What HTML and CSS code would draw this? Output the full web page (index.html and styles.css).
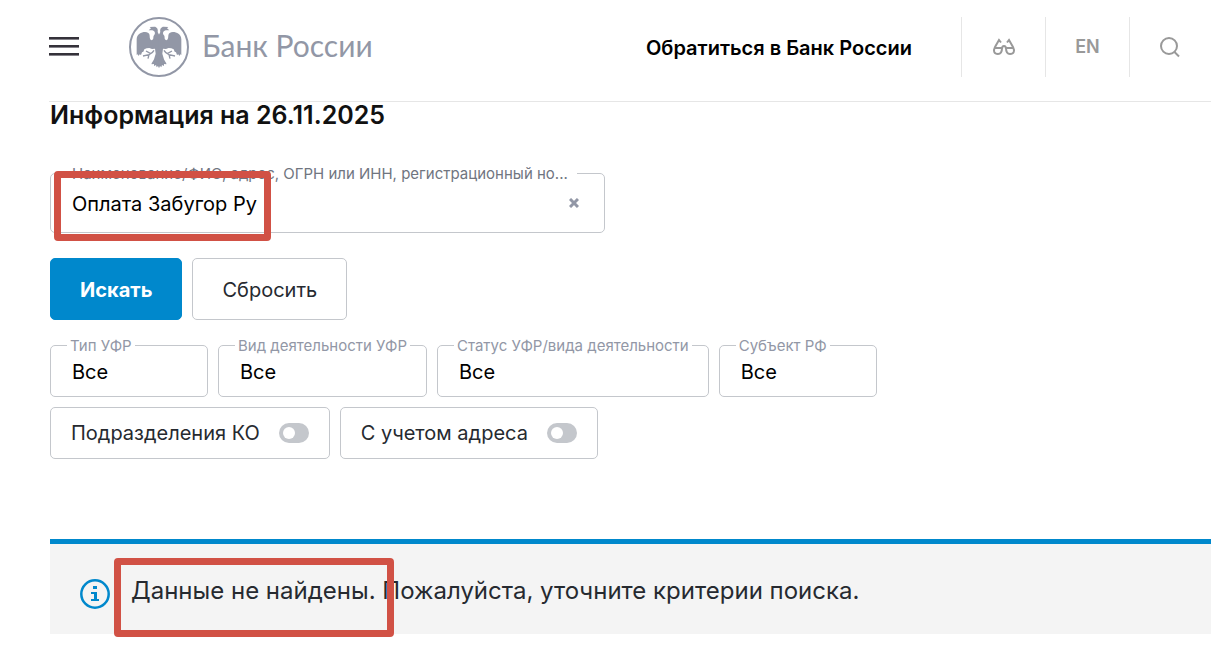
FILE: index.html
```html
<!DOCTYPE html>
<html lang="ru">
<head>
  <meta charset="UTF-8">
  <meta name="viewport" content="width=device-width, initial-scale=1">
  <title>Банк России</title>
  <link rel="stylesheet" href="styles.css">
</head>
<body>

  <header class="header">
    <button class="menu-btn" type="button" aria-label="Меню">
      <span></span>
      <span></span>
      <span></span>
    </button>

    <a class="logo" href="#">
      <svg class="logo-sign" viewBox="0 0 180 180" aria-hidden="true">
        <defs>
          <g id="half">
            <path d="M91 55 L86 45 C88 36 83 29 76 29 L62 30 L66 34 L59 40 L70 40 C80 43 79 51 75 55 C71 60 76 67 68 70 C58 66 66 53 58 48 C48 41 23 48 23 67 L23 114 L26 112 L29 117 L32 112 L36 114 L39 106 L43 104 L46 97 L53 94 L61 93 L69 96 L78 95 L80 110 L76 124 C75 131 66 138 68 142 L75 141 L75 147 L81 144 L83 151 L87 147 L91 153 Z"/>
            <path class="claw" d="M75 100 Q71 108 60 113 M65 110 L51 102 M60 113 L42 117 M60 113 L57 125"/>
          </g>
        </defs>
        <circle cx="90" cy="90" r="87"/>
        <use href="#half"/>
        <use href="#half" transform="matrix(-1 0 0 1 180 0)"/>
      </svg>
      <span class="logo-text">Банк России</span>
    </a>

    <a class="contact" href="#">Обратиться в Банк России</a>

    <nav class="tools">
      <a class="tool" href="#" aria-label="Версия для слабовидящих">
        <svg width="24" height="18" viewBox="0 0 24 18" aria-hidden="true">
          <path d="M3 9 L7 2 L9 4.500 M21 9 L17 2 L15 4.500 M2 10 H10 M14 10 H22 M10 11 Q10 8 12 8 Q14 8 14 11 M3 9 C1 13 2 16 6 16 C9 16 10 14 10 10 M14 10 C14 14 15 16 18 16 C22 16 23 13 21 9"/>
        </svg>
      </a>
      <a class="tool" href="#">EN</a>
      <button class="tool tool-search" type="button" aria-label="Поиск">
        <svg width="22" height="22" viewBox="0 0 22 22" aria-hidden="true">
          <circle cx="10" cy="10" r="8"/>
          <path d="M15.500 16 L20 20.500"/>
        </svg>
      </button>
    </nav>
  </header>

  <main>
    <h1>Информация на 26.11.2025</h1>

    <form>
      <div class="search">
        <label for="query">Наименование/ФИО, адрес, ОГРН или ИНН, регистрационный но...</label>
        <input id="query" type="text" value="Оплата Забугор Ру">
        <button class="clear" type="button" aria-label="Очистить">
          <svg width="10" height="10" viewBox="0 0 10 10" aria-hidden="true">
            <path d="M1 1 L9 9 M9 1 L1 9"/>
          </svg>
        </button>
      </div>

      <div class="row actions">
        <button class="btn btn-primary" type="submit">Искать</button>
        <button class="btn" type="reset">Сбросить</button>
      </div>

      <div class="row">
        <div class="filter">
          <label for="type">Тип УФР</label>
          <select id="type"><option>Все</option></select>
        </div>
        <div class="filter">
          <label for="activity">Вид деятельности УФР</label>
          <select id="activity"><option>Все</option></select>
        </div>
        <div class="filter">
          <label for="status">Статус УФР/вида деятельности</label>
          <select id="status"><option>Все</option></select>
        </div>
        <div class="filter">
          <label for="region">Субъект РФ</label>
          <select id="region"><option>Все</option></select>
        </div>
      </div>

      <div class="row">
        <label class="toggle">Подразделения КО <input type="checkbox"></label>
        <label class="toggle">С учетом адреса <input type="checkbox"></label>
      </div>
    </form>

    <div class="notice">
      <svg class="notice-icon" width="30" height="30" viewBox="0 0 30 30" aria-hidden="true">
        <circle cx="15" cy="15" r="13.700"/>
        <path d="M13 7h4v3h-4z M11 13h6v7h2v2h-8v-2h3v-5h-3z"/>
      </svg>
      <p>Данные не найдены. Пожалуйста, уточните критерии поиска.</p>
    </div>
  </main>

</body>
</html>
```
FILE: styles.css
```css
*,
*::before,
*::after {
  box-sizing: border-box;
}

body {
  margin: 0;
  padding: 0 13px 16px 50px;
  font-family: Inter, "Noto Sans", sans-serif;
  font-size: 20px;
  line-height: 24px;
  color: #262a30;
  background-color: #fff;
}

a {
  color: inherit;
  text-decoration: none;
}

button,
input,
select {
  font: inherit;
  color: inherit;
}

button {
  padding: 0;
  border: none;
  background: none;
  cursor: pointer;
}

/* Header */
.header {
  display: flex;
  align-items: center;
  height: 102px;
  margin-left: -1px;
  padding-bottom: 8px;
  border-bottom: 1px solid #e6e6e6;
}

.menu-btn {
  display: flex;
  flex-direction: column;
  gap: 5px;
  width: 30px;
}

.menu-btn span {
  height: 3px;
  border-bottom: 1px solid #85838a;
  background-color: #35323a;
}

.logo {
  display: flex;
  align-items: center;
  gap: 13px;
  margin-left: 50px;
  color: #9297a6;
}

.logo-sign {
  width: 60px;
  height: 60px;
  fill: currentColor;
}

.logo-sign circle {
  fill: none;
  stroke: currentColor;
  stroke-width: 6;
}

.claw {
  fill: none;
  stroke: currentColor;
  stroke-width: 4;
}

.logo-text {
  padding-bottom: 4px;
  font-family: Lato, sans-serif;
  font-size: 30px;
  line-height: 36px;
}

.contact {
  margin-left: auto;
  padding-top: 2px;
  font-weight: 600;
  color: #000;
}

.tools {
  display: flex;
  margin-left: 49px;
}

.tool {
  display: flex;
  align-items: center;
  justify-content: center;
  width: 84px;
  height: 60px;
  border-left: 1px solid #e6e6e6;
  font-size: 18px;
  font-weight: 600;
  color: #999;
}

.tool-search {
  width: 82px;
  padding-right: 2px;
}

.tool svg {
  fill: none;
  stroke: currentColor;
  stroke-width: 2;
}

/* Search form */
h1 {
  margin: 0 0 45px;
  font-size: 25px;
  line-height: 26px;
  font-weight: 600;
  color: #111;
}

.search {
  position: relative;
  max-width: 555px;
  height: 60px;
}

.search input {
  width: 100%;
  height: 60px;
  padding: 2px 60px 0 21px;
  border: 1px solid #c4c7cc;
  border-radius: 5px;
  color: #000;
  background: none;
}

.search label {
  position: absolute;
  top: -9px;
  left: 13px;
  max-width: 520px;
  padding: 0 9px;
  overflow: hidden;
  white-space: nowrap;
  font-size: 15px;
  line-height: 20px;
  color: #70757f;
  background-color: #fff;
}

.clear {
  position: absolute;
  top: 20px;
  right: 21px;
  width: 20px;
  height: 20px;
  line-height: 0;
}

.clear svg {
  fill: none;
  stroke: #9297a6;
  stroke-width: 3;
}

/* Red marker frames */
.search::after,
.notice p::after {
  content: "";
  position: absolute;
  border: 7px solid #d15145;
  border-radius: 4px;
  pointer-events: none;
}

.search::after {
  top: -2px;
  left: 4px;
  width: 217px;
  height: 70px;
}

.row {
  display: flex;
  flex-wrap: wrap;
  gap: 10px;
  margin-bottom: 10px;
}

.actions {
  margin: 25px 0;
}

.btn {
  height: 62px;
  padding: 2px 29px 0;
  border: 1px solid #c4c7cc;
  border-radius: 5px;
}

.btn-primary {
  border-color: #0088cc;
  font-weight: 700;
  color: #fff;
  background-color: #0088cc;
}

.filter {
  display: flex;
  flex-direction: column;
  align-items: flex-start;
  min-width: 158px;
  height: 52px;
  padding: 0 16px;
  border: 1px solid #c4c7cc;
  border-radius: 5px;
}

.filter label {
  margin-top: -10px;
  padding: 0 3px;
  font-size: 15px;
  line-height: 20px;
  color: #9297a6;
  background-color: #fff;
}

.filter select {
  appearance: none;
  width: 100%;
  height: 32px;
  padding: 0 5px;
  border: none;
  color: #000;
  background: none;
}

.toggle {
  display: flex;
  align-items: center;
  gap: 19px;
  height: 52px;
  padding: 0 20px;
  border: 1px solid #c4c7cc;
  border-radius: 5px;
  cursor: pointer;
}

.toggle input {
  appearance: none;
  width: 30px;
  height: 20px;
  margin: 0;
  padding: 4px;
  border-radius: 10px;
  background-color: #c4c7cc;
}

.toggle input::before {
  content: "";
  display: block;
  width: 12px;
  height: 12px;
  border-radius: 50%;
  background-color: #fff;
}

.toggle input:checked {
  background-color: #0088cc;
}

.toggle input:checked::before {
  margin-left: auto;
}

/* Result message */
.notice {
  display: flex;
  align-items: center;
  gap: 21px;
  height: 95px;
  margin-top: 80px;
  padding: 10px 30px 0;
  border-top: 5px solid #0088cc;
  background-color: #f4f4f4;
}

.notice-icon {
  flex: none;
  fill: #0088cc;
}

.notice-icon circle {
  fill: none;
  stroke: #0088cc;
  stroke-width: 2.5;
}

.notice p {
  position: relative;
  margin: 0;
  padding-bottom: 6px;
  font-size: 24px;
  line-height: 30px;
}

.notice p::after {
  top: -18px;
  left: -17px;
  width: 280px;
  height: 79px;
}
```
